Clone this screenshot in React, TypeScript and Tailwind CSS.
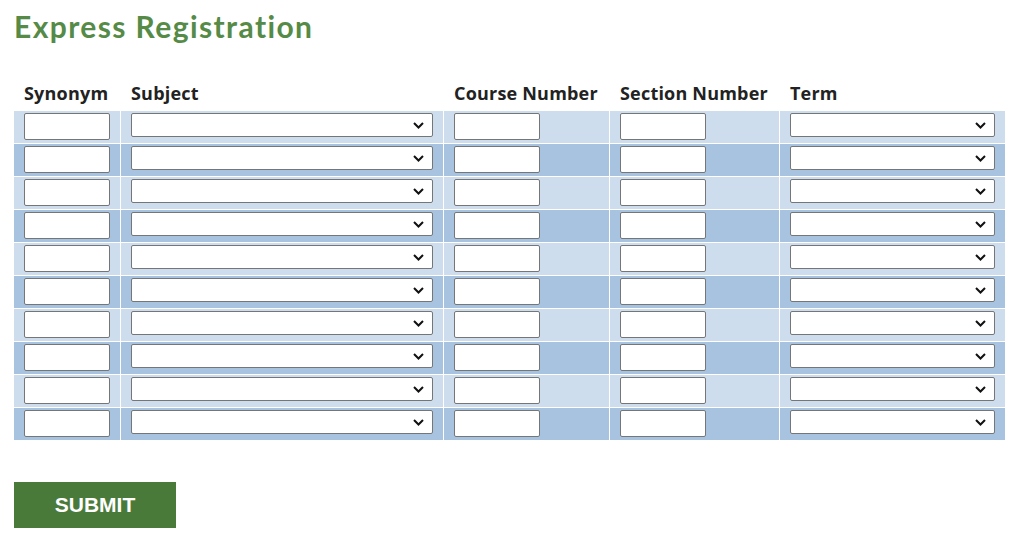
import React from 'react'

const ROWS = Array.from({ length: 10 }, (_, i) => i)

function TextBox() {
  return <input type="text" className="block w-[86px] h-[27px] border border-[#767676] rounded-[2px] bg-white" />
}

function Dropdown({ width }: { width: string }) {
  return (
    <div className={`relative ${width} h-[24px]`}>
      <select className="block w-full h-full appearance-none border border-[#767676] rounded-[2px] bg-white text-[13px]">
        <option value=""></option>
      </select>
      <svg
        className="absolute right-[9px] top-[9px] w-[11px] h-[7px] pointer-events-none text-[#111]"
        viewBox="0 0 11 7"
        fill="none"
        stroke="currentColor"
        strokeWidth={2}
      >
        <path d="M1 1l4.5 4.5L10 1" />
      </svg>
    </div>
  )
}

export default function App() {
  return (
    <main className="min-h-screen bg-white pl-[14px] pt-[6px] font-['Open_Sans',sans-serif]">
      {/* Title */}
      <h1 className="text-[30px] leading-[40px] font-bold text-[#558b46] font-['Lato',sans-serif] tracking-[1.4px]">
        Express Registration
      </h1>

      {/* Table */}
      <div className="mt-[35px] w-[991px]">
        {/* Header */}
        <div className="grid grid-cols-[106px_322px_165px_169px_225px] gap-x-px text-[18px] leading-[24px] font-bold text-[#222] tracking-[0.2px]">
          <div className="pl-[10px] pb-[6px]">Synonym</div>
          <div className="pl-[10px] pb-[6px]">Subject</div>
          <div className="pl-[10px] pb-[6px]">Course Number</div>
          <div className="pl-[10px] pb-[6px]">Section Number</div>
          <div className="pl-[10px] pb-[6px]">Term</div>
        </div>

        {/* Body */}
        <div className="flex flex-col gap-y-px">
          {ROWS.map((i) => {
            const bg = i % 2 === 0 ? 'bg-[#cedded]' : 'bg-[#a8c3df]'
            return (
              <div key={i} className="grid grid-cols-[106px_322px_165px_169px_225px] gap-x-px">
                <div className={`${bg} h-[32px] pl-[10px] pt-[2px]`}>
                  <TextBox />
                </div>
                <div className={`${bg} h-[32px] pl-[10px] pt-[2px]`}>
                  <Dropdown width="w-[302px]" />
                </div>
                <div className={`${bg} h-[32px] pl-[10px] pt-[2px]`}>
                  <TextBox />
                </div>
                <div className={`${bg} h-[32px] pl-[10px] pt-[2px]`}>
                  <TextBox />
                </div>
                <div className={`${bg} h-[32px] pl-[10px] pt-[2px]`}>
                  <Dropdown width="w-[205px]" />
                </div>
              </div>
            )
          })}
        </div>
      </div>

      {/* Submit */}
      <button className="mt-[42px] w-[162px] h-[46px] bg-[#4a7a3a] text-white text-[21px] font-bold font-['Liberation_Sans',Arial,sans-serif] uppercase">
        Submit
      </button>
    </main>
  )
}
